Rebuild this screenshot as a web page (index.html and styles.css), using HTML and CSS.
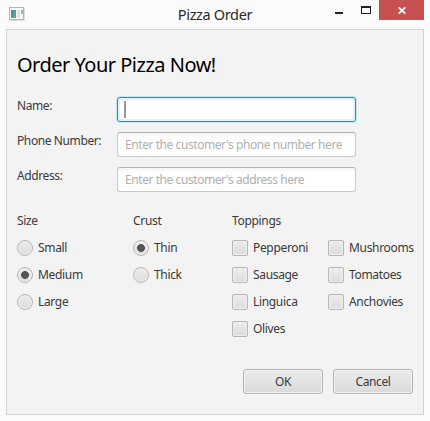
FILE: index.html
```html
<!DOCTYPE html>
<html lang="en">
<head>
<meta charset="utf-8">
<title>Pizza Order</title>
<link rel="stylesheet" href="styles.css">
</head>
<body>
<div class="window">
  <header class="titlebar">
    <svg class="app-icon" width="16" height="14" viewBox="0 0 16 14">
      <defs><linearGradient id="g" x1="0" y1="0" x2="1" y2="1"><stop offset="0" stop-color="#4b86b0"/><stop offset="1" stop-color="#5fb07c"/></linearGradient></defs>
      <rect x="1" y="1" width="15" height="13" fill="#ddd"/>
      <rect x=".5" y=".5" width="14" height="12" fill="#f8f8f8" stroke="#b4b4ba"/>
      <rect x="2" y="3" width="5" height="8" fill="url(#g)"/>
      <rect x="8" y="3" width="3" height="8" fill="#e3e3e3"/>
      <rect x="12" y="3" width="2" height="4" fill="#8fc0c0"/>
    </svg>
    <h1 class="title">Pizza Order</h1>
    <div class="controls">
      <svg class="minmax" width="36" height="20" viewBox="0 0 36 20">
        <rect x="0" y="12" width="8" height="2" fill="#222"/>
        <path d="M26 6h10v8H26zM27 8v5h8V8z" fill="#222" fill-rule="evenodd"/>
      </svg>
      <div class="close">
        <svg width="8" height="7" viewBox="0 0 8 7"><path d="M.7 .3L7.3 6.7M7.3 .3L.7 6.7" stroke="#fff" stroke-width="1.7"/></svg>
      </div>
    </div>
  </header>
  <main class="client">
    <h2 class="heading">Order Your Pizza Now!</h2>
    <div class="fields">
      <span class="label">Name:</span><div class="input focused"><i class="caret"></i></div>
      <span class="label">Phone Number:</span><div class="input">Enter the customer's phone number here</div>
      <span class="label">Address:</span><div class="input">Enter the customer's address here</div>
    </div>
    <div class="options">
      <section class="group">
        <div class="caption">Size</div>
        <div class="option"><i class="radio"></i>Small</div>
        <div class="option"><i class="radio on"></i>Medium</div>
        <div class="option"><i class="radio"></i>Large</div>
      </section>
      <section class="group">
        <div class="caption">Crust</div>
        <div class="option"><i class="radio on"></i>Thin</div>
        <div class="option"><i class="radio"></i>Thick</div>
      </section>
      <section class="group">
        <div class="caption">Toppings</div>
        <div class="option"><i class="check"></i>Pepperoni</div>
        <div class="option"><i class="check"></i>Sausage</div>
        <div class="option"><i class="check"></i>Linguica</div>
        <div class="option"><i class="check"></i>Olives</div>
      </section>
      <section class="group">
        <div class="caption"></div>
        <div class="option"><i class="check"></i>Mushrooms</div>
        <div class="option"><i class="check"></i>Tomatoes</div>
        <div class="option"><i class="check"></i>Anchovies</div>
      </section>
    </div>
    <div class="actions">
      <div class="button">OK</div>
      <div class="button">Cancel</div>
    </div>
  </main>
</div>
</body>
</html>
```
FILE: styles.css
```css
* { box-sizing: border-box; }
body {
  margin: 0;
  background: #fbfbfb;
  font: 12px/16px "Noto Sans", "Open Sans", sans-serif;
  letter-spacing: -0.4px;
  color: #3a3a3a;
  white-space: nowrap;
}
.window { width: 430px; height: 421px; padding: 0 6px; overflow: hidden; }
.titlebar {
  display: grid;
  grid-template-columns: 90px 1fr 90px;
  height: 29px;
}
.app-icon { margin: 7px 0 0 3px; }
.title {
  margin: 4px 0 0;
  font-size: 14.5px;
  line-height: 20px;
  font-weight: 400;
  letter-spacing: -0.35px;
  text-align: center;
  color: #2a2a2a;
}
.controls { display: flex; justify-content: flex-end; gap: 8px; }
.close {
  display: flex;
  align-items: center;
  justify-content: center;
  flex: none;
  width: 45px;
  height: 20px;
  background: #c75050;
}
.client {
  width: 418px;
  height: 386px;
  padding: 21px 10px 0;
  border: 1px solid #d2d2d2;
  background: #f3f3f3;
}
.heading {
  margin: 0 0 18px;
  font-size: 20px;
  line-height: 28px;
  font-weight: 400;
  letter-spacing: -0.5px;
  color: #000;
}
.fields { display: grid; grid-template-columns: 100px 239px; row-gap: 10px; }
.label { padding-top: 1px; }
.input {
  display: flex;
  align-items: center;
  height: 25px;
  padding: 0 7px;
  border: 1px solid #c8c8c8;
  border-top-color: #b4b4b4;
  border-radius: 3px;
  background: linear-gradient(#f5f5f5, #fff 5px);
  letter-spacing: -0.43px;
  color: #b0b0b0;
}
.focused {
  border-color: #039ed3;
  background: #fff;
  box-shadow: 0 0 0 1px #c3e5f0, inset 0 0 0 2px #def2f9;
}
.caret { width: 2px; height: 17px; background: #999; margin-left: -1px; }
.options { display: grid; grid-template-columns: 116px 99px 96px 1fr; margin-top: 21px; height: 124px; letter-spacing: -0.33px; }
.caption { height: 27px; }
.option { display: flex; align-items: center; gap: 5px; height: 16px; margin-bottom: 11px; }
.radio, .check {
  width: 16px;
  height: 16px;
  border: 1px solid #b5b5b5;
  background: linear-gradient(#ececec, #dcdcdc);
  box-shadow: inset 0 0 0 1px #f0f0f0;
}
.radio { border-radius: 50%; }
.check { border-radius: 2px; }
.on { background: radial-gradient(circle, #555 3.6px, transparent 4.2px), linear-gradient(#ececec, #dcdcdc); }
.actions { display: flex; justify-content: flex-end; gap: 10px; margin-top: 32px; }
.button {
  width: 80px;
  height: 25px;
  border: 1px solid #b5b5b5;
  border-radius: 3px;
  background: linear-gradient(#ececec, #dadada);
  box-shadow: inset 0 0 0 1px #f0f0f0;
  line-height: 23px;
  text-align: center;
}
```
